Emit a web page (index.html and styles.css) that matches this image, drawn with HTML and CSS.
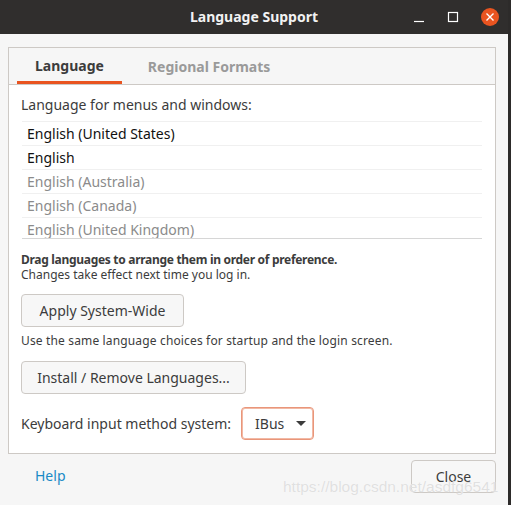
FILE: index.html
```html
<!DOCTYPE html>
<html>
<head>
<meta charset="utf-8">
<link rel="stylesheet" href="styles.css">
</head>
<body>
<div class="window">
  <div class="titlebar">
    <div class="title">Language Support</div>
    <div class="wbtns">
      <span class="wbtn"><svg width="12" height="12" viewBox="0 0 12 12"><path d="M1 10.5h10" stroke="#fff" stroke-width="1.2"/></svg></span>
      <span class="wbtn"><svg width="12" height="12" viewBox="0 0 12 12"><rect x="1.5" y="1.5" width="9" height="9" fill="none" stroke="#fff" stroke-width="1.2"/></svg></span>
      <span class="wbtn close"><svg width="18" height="18" viewBox="0 0 18 18"><circle cx="9" cy="9" r="9" fill="#e95420"/><path d="M5.5 5.5l7 7M12.5 5.5l-7 7" stroke="#fff" stroke-width="1.4"/></svg></span>
    </div>
  </div>
  <div class="body">
    <div class="notebook">
      <div class="tabs">
        <div class="tab active">Language</div>
        <div class="tab">Regional Formats</div>
      </div>
      <div class="page">
        <div class="label">Language for menus and windows:</div>
        <div class="list">
          <div class="row dark">English (United States)</div>
          <div class="row dark">English</div>
          <div class="row">English (Australia)</div>
          <div class="row">English (Canada)</div>
          <div class="row">English (United Kingdom)</div>
        </div>
        <div class="hint"><b>Drag languages to arrange them in order of preference.</b><br>Changes take effect next time you log in.</div>
        <button class="btn apply">Apply System-Wide</button>
        <div class="small">Use the same language choices for startup and the login screen.</div>
        <button class="btn install">Install / Remove Languages...</button>
        <div class="kbd">
          <span>Keyboard input method system:</span>
          <span class="combo">IBus <svg width="10" height="6" viewBox="0 0 10 6"><path d="M0 0h10L5 5z" fill="#3c3c3c"/></svg></span>
        </div>
      </div>
    </div>
    <div class="footer">
      <a class="help">Help</a>
      <button class="btn closebtn">Close</button>
    </div>
  </div>
  <div class="watermark">https://blog.csdn.net/asdfg6541</div>
</div>
</body>
</html>
```
FILE: styles.css
```css
html, body {
  margin: 0;
  padding: 0;
  background: #2d2b2a;
  width: 511px;
  height: 505px;
  overflow: hidden;
}
.window {
  position: relative;
  width: 508px;
  height: 505px;
  background: #f6f6f6;
  font-family: "Noto Sans", sans-serif;
  color: #3c3c3c;
}
.titlebar {
  height: 34px;
  background: #302e2d;
  display: flex;
  align-items: center;
  justify-content: center;
  position: relative;
}
.title {
  color: #f2f2f2;
  font-weight: bold;
  font-size: 14px;
  margin-top: -2px;
}
.wbtns {
  position: absolute;
  right: 9px;
  top: 8px;
  display: flex;
  align-items: center;
  gap: 22px;
}
.wbtn {
  display: flex;
  width: 12px;
  height: 18px;
  align-items: center;
  justify-content: center;
}
.wbtn.close { width: 18px; }
.body {
  padding: 13px 12px 0 8px;
}
.notebook {
  border: 1px solid #cdc9c5;
  height: 405px;
  display: flex;
  flex-direction: column;
}
.tabs {
  height: 36px;
  border-bottom: 1px solid #cdc9c5;
  display: flex;
  padding-left: 8px;
  gap: 8px;
}
.tab {
  padding: 0 18px;
  font-size: 14px;
  font-weight: bold;
  color: #9a9a9a;
  display: flex;
  align-items: center;
  box-sizing: border-box;
  height: 36px;
  padding-top: 1px;
}
.tab.active {
  color: #3c3c3c;
  border-bottom: 3px solid #e95420;
  padding-top: 2px;
}
.page {
  background: #fff;
  flex: 1;
  padding: 0 12px;
  display: flex;
  flex-direction: column;
  align-items: flex-start;
}
.label {
  font-size: 14px;
  margin-top: 10px;
  line-height: 20px;
}
.list {
  align-self: stretch;
  margin: 6px 0 0 1px;
  width: 460px;
  height: 116px;
  overflow: hidden;
  border-top: 1px solid #f0f0f0;
  border-bottom: 1px solid #d6d6d6;
}
.row {
  height: 23px;
  line-height: 23px;
  border-bottom: 1px solid #f0f0f0;
  padding-left: 5px;
  font-size: 14px;
  color: #8b8b8b;
}
.row.dark { color: #111; }
.hint {
  font-size: 12px;
  line-height: 15px;
  margin-top: 13px;
}
.hint b { letter-spacing: -0.3px; }
.btn {
  font-family: "Noto Sans", sans-serif;
  font-size: 14px;
  color: #3c3c3c;
  background: #f7f7f7;
  border: 1px solid #cdc9c5;
  border-radius: 4px;
  height: 33px;
  padding: 0;
  white-space: nowrap;
}
.apply { margin-top: 12px; width: 163px; }
.small {
  font-size: 12px;
  line-height: 15px;
  margin-top: 6px;
  letter-spacing: 0.15px;
}
.install { margin-top: 13px; width: 225px; }
.kbd {
  margin-top: 13px;
  display: flex;
  align-items: center;
  gap: 10px;
  font-size: 14px;
}
.combo {
  box-sizing: border-box;
  height: 33px;
  width: 73px;
  border: 1px solid #e9967a;
  box-shadow: inset 0 0 0 1px #f2b9a5;
  border-radius: 4px;
  display: flex;
  align-items: center;
  gap: 12px;
  padding-left: 13px;
}
.footer {
  display: flex;
  justify-content: space-between;
  padding: 6px 0 0 27px;
}
.help {
  color: #1a8ac6;
  font-size: 14px;
  margin-top: 6px;
}
.closebtn {
  width: 85px;
  height: 33px;
}
.watermark {
  position: absolute;
  left: 283px;
  top: 478px;
  font-family: "Liberation Sans", sans-serif;
  font-size: 15.5px;
  color: rgba(220,220,220,0.9);
  text-shadow: 0 0 1px #fff;
}
```
